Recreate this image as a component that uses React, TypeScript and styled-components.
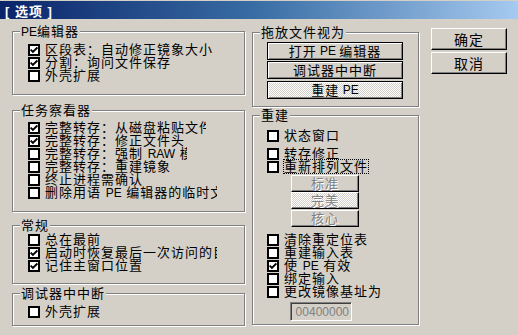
import styled, { createGlobalStyle, css } from 'styled-components';

const Global = createGlobalStyle`
  html, body { margin: 0; padding: 0; background: #d4d0c8; }
`;

const FONT = `"Liberation Sans", "Noto Sans CJK SC", sans-serif`;

const Window = styled.div`
  width: 518px;
  height: 335px;
  padding-top: 1px;
  box-sizing: border-box;
  background: #d4d0c8;
  font-family: ${FONT};
  font-size: 13px;
  letter-spacing: 1px;
  color: #000;
  overflow: hidden;
`;

const TitleBar = styled.div`
  height: 18px;
  display: flex;
  align-items: center;
  padding-left: 5px;
  background: linear-gradient(to right, #0a246a 0%, #3a6ea5 50%, #a6caf0 100%);
  color: #fff;
  font-weight: bold;
  font-size: 13px;
  letter-spacing: 1px;
  white-space: pre;
`;

const Body = styled.div`
  display: flex;
  align-items: flex-start;
  padding-left: 12px;
`;

const Column = styled.div<{ $w: number; $ml?: number }>`
  display: flex;
  flex-direction: column;
  width: ${(p) => p.$w}px;
  margin-left: ${(p) => p.$ml ?? 0}px;
`;

const Group = styled.div<{ $mt: number; $h: number; $pt: number; $pl?: number }>`
  position: relative;
  box-sizing: border-box;
  margin-top: ${(p) => p.$mt}px;
  height: ${(p) => p.$h}px;
  padding: ${(p) => p.$pt}px 0 0 ${(p) => p.$pl ?? 15}px;
  border: 1px solid #808080;
  box-shadow: inset 1px 1px #fff, 1px 1px #fff;
  display: flex;
  flex-direction: column;
`;

const Legend = styled.div`
  position: absolute;
  top: -7px;
  left: 7px;
  padding: 0 1px;
  line-height: 13px;
  background: #d4d0c8;
  white-space: nowrap;
`;

const Lat = styled.span`
  letter-spacing: 0;
  font-size: 12px;
`;

const Row = styled.div<{ $mt?: number }>`
  display: flex;
  align-items: center;
  height: 13px;
  margin-top: ${(p) => p.$mt ?? 0}px;
`;

const Box = styled.span<{ $on?: boolean }>`
  box-sizing: border-box;
  flex: none;
  width: 12px;
  height: 12px;
  margin-right: 5px;
  border: 2px solid #000;
  background: #fff;
  display: flex;
  align-items: center;
  justify-content: center;
`;

const Label = styled.span<{ $clip?: number; $focus?: boolean }>`
  line-height: 13px;
  white-space: nowrap;
  overflow: hidden;
  ${(p) => p.$clip && css`width: ${p.$clip}px;`}
  ${(p) =>
    p.$focus &&
    css`
      outline: 1px dotted #000;
      outline-offset: 0;
    `}
`;

const Check = () => (
  <svg width="8" height="8" viewBox="0 0 8 8">
    <polyline points="0.6,3.6 2.9,5.9 7.4,1.4" fill="none" stroke="#000" strokeWidth="1.9" />
  </svg>
);

const CheckRow = ({
  text,
  on,
  clip,
  mt,
  focus,
}: {
  text: React.ReactNode;
  on?: boolean;
  clip?: number;
  mt?: number;
  focus?: boolean;
}) => (
  <Row $mt={mt}>
    <Box $on={on}>{on && <Check />}</Box>
    <Label $clip={clip} $focus={focus}>
      {text}
    </Label>
  </Row>
);

const dither = css`
  background: repeating-conic-gradient(#ffffff 0 25%, #d4d0c8 0 50%) 0 0 / 2px 2px;
`;

const FrameButton = styled.div<{ $pressed?: boolean; $mt?: number }>`
  box-sizing: border-box;
  width: 136px;
  height: 18px;
  margin-top: ${(p) => p.$mt ?? 0}px;
  border: 1px solid #000;
  box-shadow: inset 1px 1px #fff, inset -1px -1px #808080;
  background: #d4d0c8;
  ${(p) => p.$pressed && dither}
  display: flex;
  align-items: center;
  justify-content: center;
  line-height: 13px;
`;

const SubButton = styled.div<{ $pressed?: boolean; $mt?: number }>`
  box-sizing: border-box;
  width: 68px;
  height: 17px;
  margin: ${(p) => p.$mt ?? 0}px 0 0 24px;
  border: 1px solid;
  border-color: #fff #000 #000 #fff;
  box-shadow: inset -1px -1px #808080;
  background: #d4d0c8;
  ${(p) => p.$pressed && dither}
  display: flex;
  align-items: center;
  justify-content: center;
  color: #808080;
  text-shadow: 1px 1px #fff;
  line-height: 13px;
`;

const DialogButton = styled.div<{ $mt?: number }>`
  box-sizing: border-box;
  width: 76px;
  height: 22px;
  margin-top: ${(p) => p.$mt ?? 0}px;
  border: 1px solid;
  border-color: #fff #000 #000 #fff;
  box-shadow: inset -1px -1px #808080;
  display: flex;
  align-items: center;
  justify-content: center;
  font-size: 14px;
`;

const NumberField = styled.div`
  box-sizing: border-box;
  width: 62px;
  height: 19px;
  margin: 4px 0 0 23px;
  border: 1px solid;
  border-color: #808080 #fff #fff #808080;
  box-shadow: inset 1px 1px #404040;
  display: flex;
  align-items: center;
  justify-content: flex-end;
  padding-right: 2px;
  color: #808080;
  font-size: 12px;
  letter-spacing: 0;
`;

export default function App() {
  return (
    <>
      <Global />
      <Window>
        <TitleBar>[ 选项 ]</TitleBar>
        <Body>
          <Column $w={233}>
            <Group $mt={12} $h={64} $pt={11}>
              <Legend>
                <Lat>PE</Lat>编辑器
              </Legend>
              <CheckRow on text="区段表：自动修正镜象大小" />
              <CheckRow on text="分割：询问文件保存" />
              <CheckRow text="外壳扩展" />
            </Group>
            <Group $mt={15} $h={102} $pt={10}>
              <Legend>任务察看器</Legend>
              <CheckRow on clip={161} text="完整转存：从磁盘粘贴文件" />
              <CheckRow on text="完整转存：修正文件头" />
              <CheckRow
                clip={142}
                text={
                  <>
                    完整转存：强制 <Lat>RAW</Lat> 模式
                  </>
                }
              />
              <CheckRow text="完整转存：重建镜象" />
              <CheckRow text="终止进程需确认" />
              <CheckRow
                clip={172}
                text={
                  <>
                    删除用语 <Lat>PE</Lat> 编辑器的临时文件
                  </>
                }
              />
            </Group>
            <Group $mt={13} $h={59} $pt={7}>
              <Legend>常规</Legend>
              <CheckRow text="总在最前" />
              <CheckRow on clip={172} text="启动时恢复最后一次访问的目录" />
              <CheckRow on text="记住主窗口位置" />
            </Group>
            <Group $mt={9} $h={33} $pt={11}>
              <Legend>调试器中中断</Legend>
              <CheckRow text="外壳扩展" />
            </Group>
          </Column>

          <Column $w={167} $ml={7}>
            <Group $mt={13} $h={75} $pt={9} $pl={14}>
              <Legend>拖放文件视为</Legend>
              <FrameButton>
                打开 <Lat>&nbsp;PE&nbsp;</Lat> 编辑器
              </FrameButton>
              <FrameButton $mt={1}>调试器中中断</FrameButton>
              <FrameButton $mt={2} $pressed>
                重建 <Lat>&nbsp;PE</Lat>
              </FrameButton>
            </Group>
            <Group $mt={8} $h={210} $pt={13} $pl={14}>
              <Legend>重建</Legend>
              <CheckRow text="状态窗口" />
              <CheckRow mt={5} text="转存修正" />
              <CheckRow focus text="重新排列文件" />
              <SubButton $mt={2}>标准</SubButton>
              <SubButton $mt={0} $pressed>
                完美
              </SubButton>
              <SubButton $mt={1}>核心</SubButton>
              <CheckRow mt={6} text="清除重定位表" />
              <CheckRow text="重建输入表" />
              <CheckRow
                on
                text={
                  <>
                    使 <Lat>PE</Lat> 有效
                  </>
                }
              />
              <CheckRow text="绑定输入" />
              <CheckRow text="更改镜像基址为" />
              <NumberField>00400000</NumberField>
            </Group>
          </Column>

          <Column $w={76} $ml={12}>
            <DialogButton $mt={9}>确定</DialogButton>
            <DialogButton $mt={2}>取消</DialogButton>
          </Column>
        </Body>
      </Window>
    </>
  );
}
